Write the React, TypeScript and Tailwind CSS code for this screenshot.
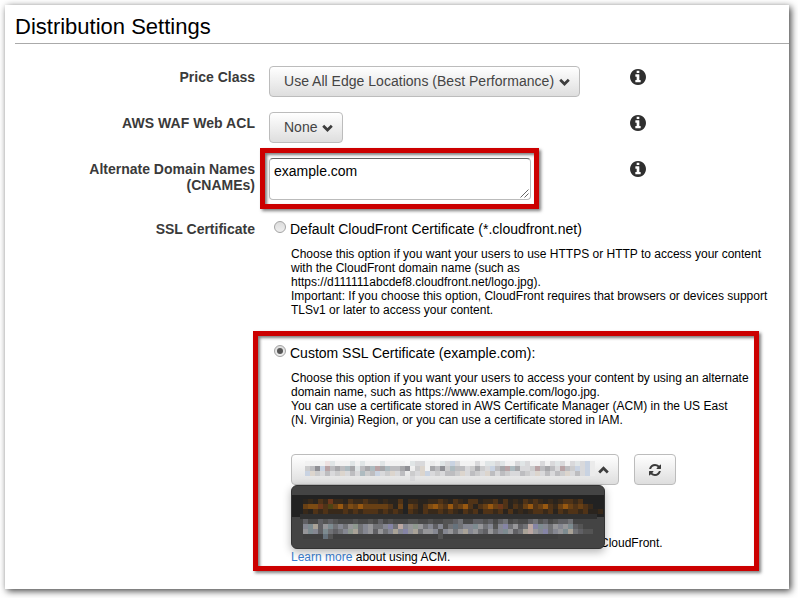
import React from "react";

const LIGHT: Record<string, string> = {
  w: "#f2f2f2", f: "#ebebeb", r: "#eee2e2", s: "#e0e5e6", a: "#d9d9db", b: "#cccccd", c: "#bdbdc0",
  d: "#a7a7aa", e: "#909095", p: "#b9a3a5", t: "#aebbc0", y: "#dcd5cd", v: "#c9d3e2",
};
const LIGHT_ROWS = [
  "wwwwrswwwswswwwswwww.saawfwsavawwwawssaswwasawwawasawasavfw",
  "bcevpcdctdscdtpdtccde.bywdcebtccabdbavcdptdaabpcdcapcbvavfw",
  "vybacabyacatbcvabyac.bayvabaccbyacbaycacbaacbayacacbyacavff",
  ".....................a.....................................",
];

const WARM: Record<string, string> = {
  a: "#2a241e", b: "#38291a", c: "#503317", d: "#694014", e: "#7c4b13", f: "#985810", r: "#6d371a", g: "#4d4315",
};
const WARM_ROWS = [
  "abacbrbbacbbcbbabaac.bbaabbcbacbaccabbcacabacbcbababccbc",
  "deercgdfcedfdddddcad.dcacefdcfcdfcacdfdrcacbdfcdfcbdfdcdcb",
  "bacbcbbbcbcbcccbcbcb.cbacbbcbcbacbcaccbcacababccbcacbccbcaab",
];

const COOL: Record<string, string> = {
  a: "#494949", b: "#545454", c: "#606064", d: "#717276", e: "#858791", f: "#969699", g: "#a9a297",
  h: "#7d8b90", i: "#8e988e", p: "#bba7a2", v: "#8584a5", k: "#404040", q: "#66727c",
};
const COOL_ROWS = [
  "caacbcbaaabaabacabaaabbaabaabbcdaaccbcacdabaacdbcabccd",
  "ehgcfhdedfidefddevdpefifdecebdqdeehfdebevdfcdpvhedfefhcb",
  "fhechdcdeigdefcfdegevfgdffebefdfgefdcfdehfcdgpfevdefhgdcbb",
  "kkkkqbkkkkkkkkkkkkkkkkkkkkkbkkkkkkkkkkkkkkkkkkkkkkk",
];

function Cells({ rows, palette }: { rows: string[]; palette: Record<string, string> }) {
  return (
    <>
      {rows.map((row, y) => (
        <div key={y} className="flex h-[5px]">
          {row.split("").map((cell, x) => (
            <span
              key={x}
              className="block h-[5px] w-[5px] shrink-0"
              style={{ backgroundColor: palette[cell] ?? "transparent" }}
            />
          ))}
        </div>
      ))}
    </>
  );
}

function Info() {
  return (
    <svg className="h-4 w-4 fill-[#2f2f2f]" viewBox="128 128 1536 1536">
      <path d="M1152 1376v-160q0-14-9-23t-23-9h-96v-512q0-14-9-23t-23-9h-320q-14 0-23 9t-9 23v160q0 14 9 23t23 9h96v320h-96q-14 0-23 9t-9 23v160q0 14 9 23t23 9h448q14 0 23-9t9-23zm-128-896v-160q0-14-9-23t-23-9h-192q-14 0-23 9t-9 23v160q0 14 9 23t23 9h192q14 0 23-9t9-23zm640 416q0 209-103 385.5t-279.5 279.5-385.5 103-385.5-103-279.5-279.5-103-385.5 103-385.5 279.5-279.5 385.5-103 385.5 103 279.5 279.5 103 385.5z" />
    </svg>
  );
}

function Chevron({ up = false }: { up?: boolean }) {
  return (
    <svg className="mt-[1px] h-[8px] w-[11px] shrink-0" viewBox="0 0 11 8" fill="none" stroke="#3d3d3d" strokeWidth="2.7">
      <path d={up ? "M1.2 6.5 5.5 2.2 9.8 6.5" : "M1.2 1.7 5.5 6 9.8 1.7"} />
    </svg>
  );
}

const button =
  "flex h-[31px] items-center rounded-[4px] border border-[#bcbcbc] bg-linear-to-b from-white to-[#dedede] text-[14px] text-[#444]";

function Radio({ checked = false }: { checked?: boolean }) {
  return (
    <span className="flex h-3 w-3 shrink-0 items-center justify-center rounded-full border border-[#a3a3a3] bg-linear-to-b from-[#dcdcdc] to-[#efefef]">
      {checked && <span className="h-1.5 w-1.5 rounded-full bg-[#555]" />}
    </span>
  );
}

function Label({ children }: { children: React.ReactNode }) {
  return (
    <div className="w-[250px] shrink-0 text-right text-[14px] leading-4 font-bold text-[#3a3a3a]">{children}</div>
  );
}

const frame = "border-[5px] border-[#cc0000] shadow-[2px_2px_3px_rgba(0,0,0,0.5),inset_2px_2px_3px_rgba(0,0,0,0.5)]";

export default function App() {
  return (
    <div className="h-[598px] w-[798px] overflow-hidden bg-white pt-[5px] pl-[5px] font-['Liberation_Sans',Arial,sans-serif] text-black">
      <main className="h-[584px] w-[784px] bg-white shadow-[2px_2px_7px_rgba(0,0,0,0.75)]">
        <div className="pl-[10px]">
          <h1 className="h-[39px] border-b border-[#aaa] pt-[8px] text-[22px] leading-[28px]">Distribution Settings</h1>
        </div>

        <div className="flex h-[46px] pt-[22px]">
          <Label><div className="pt-[3px]">Price Class</div></Label>
          <div className="flex w-[375px] shrink-0 pl-[14px]">
            <div className={`${button} w-[311px] justify-between pr-[9px] pl-[14px]`}>
              <span className="tracking-[0.02px]">Use All Edge Locations (Best Performance)</span>
              <Chevron />
            </div>
          </div>
          <div className="pt-[3px]"><Info /></div>
        </div>

        <div className="flex h-[46px] pt-[22px]">
          <Label><div className="pt-[3px] tracking-[0.05px]">AWS WAF Web ACL</div></Label>
          <div className="flex w-[375px] shrink-0 pl-[14px]">
            <div className={`${button} w-[74px] justify-between pr-[9px] pl-[14px]`}>
              <span>None</span>
              <Chevron />
            </div>
          </div>
          <div className="pt-[3px]"><Info /></div>
        </div>

        <div className="flex h-[85px] pt-[12px]">
          <Label><div className="pt-[13px]">Alternate Domain Names<br />(CNAMEs)</div></Label>
          <div className="w-[375px] shrink-0 pl-[5px]">
            <div className={`${frame} h-[61px] w-[279px] pt-[5px] pl-[4px]`}>
              <div className="flex h-[42px] w-[262px] justify-between rounded-[4px] border border-t-[#666] border-r-[#bbb] border-b-[#bbb] border-l-[#bbb] bg-white pl-[4px] text-[14px]">
                <span className="pt-[3px] leading-[18px]">example.com</span>
                <svg className="mr-[1px] mb-[1px] h-[9px] w-[9px] self-end" viewBox="0 0 9 9" stroke="#555" strokeWidth="0.9">
                  <path d="M0.5 8.5 8.5 0.5M4.5 8.5 8.5 4.5" />
                </svg>
              </div>
            </div>
          </div>
          <div className="pt-[13px]"><Info /></div>
        </div>

        <div className="flex h-[110px]">
          <Label>SSL Certificate</Label>
          <div className="pl-[19px]">
            <div className="flex h-[17px] gap-[4px] text-[14px] leading-[16px]">
              <Radio />
              <span>Default CloudFront Certificate (*.cloudfront.net)</span>
            </div>
            <p className="pt-[9px] pl-[17px] text-[12px] leading-[14px] whitespace-nowrap">
              Choose this option if you want your users to use HTTPS or HTTP to access your content<br />
              with the CloudFront domain name (such as<br />
              https://d111111abcdef8.cloudfront.net/logo.jpg).<br />
              Important: If you choose this option, CloudFront requires that browsers or devices support<br />
              TLSv1 or later to access your content.
            </p>
          </div>
        </div>

        <section className={`${frame} ml-[248px] h-[240px] w-[506px] pt-[9px] pl-[16px]`}>
          <div className="flex h-[17px] gap-[4px] text-[14px] leading-[16px]">
            <Radio checked />
            <span>Custom SSL Certificate (example.com):</span>
          </div>
          <p className="pt-[9px] pl-[17px] text-[12px] leading-[14px] whitespace-nowrap">
            Choose this option if you want your users to access your content by using an alternate<br />
            domain name, such as https://www.example.com/logo.jpg.<br />
            <span className="tracking-[0.015px]">You can use a certificate stored in AWS Certificate Manager (ACM) in the US East</span><br />
            (N. Virginia) Region, or you can use a certificate stored in IAM.
          </p>
          <div className="relative flex gap-[15px] pt-[27px] pl-[17px]">
            <div className={`${button} w-[328px] justify-between pr-[9px] pl-[13px]`}>
              <div className="w-[290px] self-start overflow-hidden pt-[6px]">
                <Cells rows={LIGHT_ROWS} palette={LIGHT} />
              </div>
              <Chevron up />
            </div>
            <div className={`${button} w-[42px] justify-center`}>
              <svg className="h-[12px] w-[12px] fill-[#3b3b3b]" viewBox="0 0 1536 1536">
                <path d="M1511 928q0 5-1 7-64 268-268 434.5t-478 166.5q-146 0-282.5-55t-243.5-157l-129 129q-19 19-45 19t-45-19-19-45v-448q0-26 19-45t45-19h448q26 0 45 19t19 45-19 45l-137 137q71 66 161 102t187 36q134 0 250-65t186-179q11-17 53-117 8-23 30-23h192q13 0 22.5 9.5t9.5 22.5zm25-800v448q0 26-19 45t-45 19h-448q-26 0-45-19t-19-45 19-45l138-138q-148-137-349-137-134 0-250 65t-186 179q-11 17-53 117-8 23-30 23h-199q-13 0-22.5-9.5t-9.5-22.5v-7q65-268 270-434.5t480-166.5q146 0 284 55.5t245 156.5l130-129q19-19 45-19t45 19 19 45z" />
              </svg>
            </div>
            <div className="absolute top-[58px] left-[17px] h-[64px] w-[314px] overflow-hidden rounded-[6px] border border-[#333] bg-[#444] pt-[9px] shadow-[0_3px_8px_rgba(0,0,0,0.3)]">
              <div className="h-[22px] bg-[#222] pt-[4px] pl-[11px]">
                <Cells rows={WARM_ROWS} palette={WARM} />
                <div className="-ml-[3px] h-[5px] w-[297px] bg-[#303030]" />
              </div>
              <div className="pt-[2px] pl-[11px]">
                <Cells rows={COOL_ROWS} palette={COOL} />
              </div>
            </div>
          </div>
          <p className="pt-[51px] pl-[17px] text-[12px] leading-[14px]">
            <span className="block pl-[309px]">CloudFront.</span>
            <a className="text-[#3b7ed0]">Learn more</a> about using ACM.
          </p>
        </section>
      </main>
    </div>
  );
}
